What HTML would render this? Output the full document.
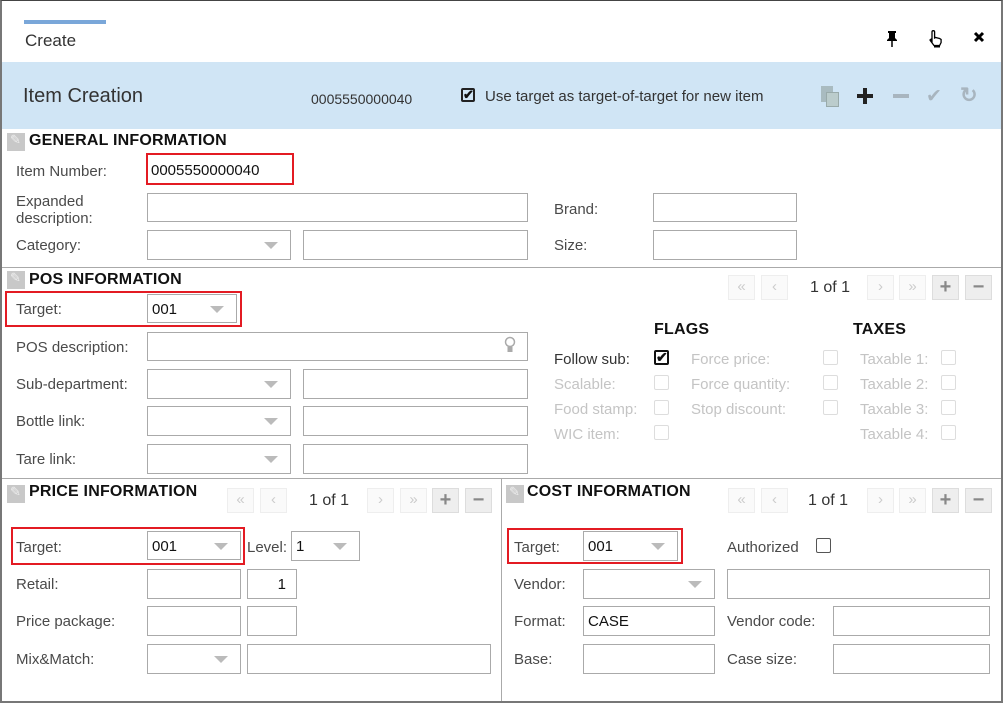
<!DOCTYPE html>
<html><head><style>
*{box-sizing:border-box;margin:0;padding:0}
body{width:1003px;height:703px;position:relative;overflow:hidden;background:#fff;font-family:"Liberation Sans",sans-serif;font-size:14px;color:#333}
.a{position:absolute}
.frame{left:0;top:0;width:1003px;height:703px;border:2px solid #777;border-top:1px solid #444;}
.l{position:absolute;color:#4a4a4a;font-size:15px;line-height:17px;margin-top:2px}
.g{color:#c4c4c4}
.i{position:absolute;border:1px solid #aaa;background:#fff;font-size:15px;padding-left:4px;color:#111}
.s::after{content:"";position:absolute;right:12px;top:50%;margin-top:-3px;border-left:7px solid transparent;border-right:7px solid transparent;border-top:7px solid #bbb}
.red{position:absolute;border:2px solid #e31b23}
.h{position:absolute;font-weight:bold;font-size:16px;color:#111;letter-spacing:.2px}
.ic{position:absolute;width:18px;height:18px;background:#c8c8c8}
.ic::after{content:"✎";position:absolute;left:3px;top:-1px;font-size:13px;color:#eee}
.pb{position:absolute;width:27px;height:25px;border:1px solid #eee;background:#fafafa;color:#ccc;text-align:center;line-height:22px;font-size:15px}
.pb.d{background:#eee;border-color:#ddd;color:#888;font-weight:bold;font-size:20px}
.cb{position:absolute;width:15px;height:15px;border:1px solid #ddd;border-radius:2px}
.hl{position:absolute;left:0;width:1003px;height:1px;background:#aaa}
</style></head><body>
<div class="a" style="left:24px;top:20px;width:82px;height:4px;background:#7aa7d9"></div>
<div class="a" style="left:25px;top:31px;font-size:17px;color:#333">Create</div>
<svg class="a" style="left:885px;top:30px" width="14" height="18" viewBox="0 0 14 18"><path d="M3 1h8v2h-1v5l2 2v1H2v-1l2-2V3H3z" fill="#000"/><path d="M7 11v6" stroke="#000" stroke-width="1.5"/></svg>
<svg class="a" style="left:927px;top:29px" width="16" height="19" viewBox="0 0 16 19"><path d="M5 12V3a1.3 1.3 0 0 1 2.6 0v6l1-.5 2 .5 2 .5 1.5 1v3l-1.5 3H7l-3-4-1-1.5 1-.8z" fill="#fff" stroke="#000" stroke-width="1.3"/><rect x="7" y="16" width="6" height="2.5" fill="#000"/></svg>
<svg class="a" style="left:973px;top:31px" width="12" height="12" viewBox="0 0 12 12"><path d="M2 2l8 8M10 2l-8 8" stroke="#000" stroke-width="3"/></svg>
<div class="a" style="left:2px;top:62px;width:999px;height:67px;background:#d0e5f5"></div>
<div class="a" style="left:23px;top:85px;font-size:20px;color:#333">Item Creation</div>
<div class="a" style="left:311px;top:91px;font-size:14px;color:#333">0005550000040</div>
<div class="a" style="left:461px;top:88px;width:14px;height:14px;border:2px solid #222;border-radius:2px;font-size:13px;line-height:10px;font-weight:bold;color:#111">✔</div>
<div class="a" style="left:485px;top:88px;font-size:15px;color:#333">Use target as target-of-target for new item</div>
<div class="a" style="left:821px;top:86px;width:12px;height:16px;background:#9aa;opacity:.7"></div>
<div class="a" style="left:826px;top:92px;width:13px;height:15px;background:#bcc;border:1px solid #9aa"></div>
<div class="a" style="left:857px;top:94px;width:16px;height:4px;background:#222"></div>
<div class="a" style="left:863px;top:88px;width:4px;height:16px;background:#222"></div>
<div class="a" style="left:893px;top:94px;width:16px;height:4px;background:#a8b5bf"></div>
<div class="a" style="left:926px;top:85px;font-size:19px;color:#a8b5bf">✔</div>
<div class="a" style="left:960px;top:83px;font-size:21px;color:#a8b5bf;font-weight:bold">↻</div>

<div class="ic" style="left:7px;top:133px"></div>
<div class="h" style="left:29px;top:132px">GENERAL INFORMATION</div>
<div class="l" style="left:16px;top:161px">Item Number:</div>
<div class="red" style="left:146px;top:153px;width:148px;height:32px"></div>
<div class="a" style="left:151px;top:162px;font-size:15px;color:#111">0005550000040</div>
<div class="l" style="left:16px;top:191px">Expanded<br>description:</div>
<div class="i" style="left:147px;top:193px;width:381px;height:29px"></div>
<div class="l" style="left:554px;top:199px">Brand:</div>
<div class="i" style="left:653px;top:193px;width:144px;height:29px"></div>
<div class="l" style="left:16px;top:235px">Category:</div>
<div class="i s" style="left:147px;top:230px;width:144px;height:30px"></div>
<div class="i" style="left:303px;top:230px;width:225px;height:30px"></div>
<div class="l" style="left:554px;top:235px">Size:</div>
<div class="i" style="left:653px;top:230px;width:144px;height:30px"></div>
<div class="hl" style="top:267px"></div>

<div class="ic" style="left:7px;top:271px"></div>
<div class="h" style="left:29px;top:271px">POS INFORMATION</div>
<div class="pb" style="left:728px;top:275px">«</div><div class="pb" style="left:761px;top:275px">‹</div>
<div class="a" style="left:810px;top:279px;font-size:16px;color:#333">1 of 1</div>
<div class="pb" style="left:867px;top:275px">›</div><div class="pb" style="left:899px;top:275px">»</div>
<div class="pb d" style="left:932px;top:275px">+</div><div class="pb d" style="left:965px;top:275px">−</div>
<div class="red" style="left:5px;top:291px;width:237px;height:36px"></div>
<div class="l" style="left:16px;top:299px">Target:</div>
<div class="i s" style="left:147px;top:294px;width:90px;height:29px;padding-top:6px">001</div>
<div class="l" style="left:16px;top:337px">POS description:</div>
<div class="i" style="left:147px;top:332px;width:381px;height:29px"></div>
<svg class="a" style="left:504px;top:336px" width="12" height="18" viewBox="0 0 12 18"><circle cx="6" cy="6" r="4.5" fill="none" stroke="#aaa" stroke-width="1.5"/><rect x="3.5" y="11" width="5" height="5" fill="#aaa"/></svg>
<div class="l" style="left:16px;top:374px">Sub-department:</div>
<div class="i s" style="left:147px;top:369px;width:144px;height:30px"></div>
<div class="i" style="left:303px;top:369px;width:225px;height:30px"></div>
<div class="l" style="left:16px;top:411px">Bottle link:</div>
<div class="i s" style="left:147px;top:406px;width:144px;height:30px"></div>
<div class="i" style="left:303px;top:406px;width:225px;height:30px"></div>
<div class="l" style="left:16px;top:449px">Tare link:</div>
<div class="i s" style="left:147px;top:444px;width:144px;height:30px"></div>
<div class="i" style="left:303px;top:444px;width:225px;height:30px"></div>

<div class="h" style="left:654px;top:321px">FLAGS</div>
<div class="h" style="left:853px;top:321px">TAXES</div>
<div class="l" style="left:554px;top:349px;color:#333">Follow sub:</div>
<div class="a" style="left:654px;top:350px;width:15px;height:15px;border:2px solid #111;border-radius:2px;font-size:14px;line-height:10px;font-weight:bold;color:#111">✔</div>
<div class="l g" style="left:554px;top:374px">Scalable:</div>
<div class="l g" style="left:554px;top:399px">Food stamp:</div>
<div class="l g" style="left:554px;top:424px">WIC item:</div>
<div class="cb" style="left:654px;top:375px"></div><div class="cb" style="left:654px;top:400px"></div><div class="cb" style="left:654px;top:425px"></div>
<div class="l g" style="left:691px;top:349px">Force price:</div>
<div class="l g" style="left:691px;top:374px">Force quantity:</div>
<div class="l g" style="left:691px;top:399px">Stop discount:</div>
<div class="cb" style="left:823px;top:350px"></div><div class="cb" style="left:823px;top:375px"></div><div class="cb" style="left:823px;top:400px"></div>
<div class="l g" style="left:860px;top:349px">Taxable 1:</div>
<div class="l g" style="left:860px;top:374px">Taxable 2:</div>
<div class="l g" style="left:860px;top:399px">Taxable 3:</div>
<div class="l g" style="left:860px;top:424px">Taxable 4:</div>
<div class="cb" style="left:941px;top:350px"></div><div class="cb" style="left:941px;top:375px"></div><div class="cb" style="left:941px;top:400px"></div><div class="cb" style="left:941px;top:425px"></div>
<div class="hl" style="top:478px"></div>
<div class="a" style="left:501px;top:478px;width:1px;height:225px;background:#aaa"></div>

<div class="ic" style="left:7px;top:485px"></div>
<div class="h" style="left:29px;top:483px">PRICE INFORMATION</div>
<div class="pb" style="left:227px;top:488px">«</div><div class="pb" style="left:260px;top:488px">‹</div>
<div class="a" style="left:309px;top:492px;font-size:16px;color:#333">1 of 1</div>
<div class="pb" style="left:367px;top:488px">›</div><div class="pb" style="left:400px;top:488px">»</div>
<div class="pb d" style="left:432px;top:488px">+</div><div class="pb d" style="left:465px;top:488px">−</div>
<div class="red" style="left:11px;top:527px;width:234px;height:38px"></div>
<div class="l" style="left:16px;top:537px">Target:</div>
<div class="i s" style="left:147px;top:531px;width:94px;height:29px;padding-top:6px">001</div>
<div class="l" style="left:247px;top:537px">Level:</div>
<div class="i s" style="left:291px;top:531px;width:69px;height:30px;padding-top:6px">1</div>
<div class="l" style="left:16px;top:574px">Retail:</div>
<div class="i" style="left:147px;top:569px;width:94px;height:30px"></div>
<div class="i" style="left:247px;top:569px;width:50px;height:30px;text-align:right;padding-right:10px;padding-top:6px">1</div>
<div class="l" style="left:16px;top:611px">Price package:</div>
<div class="i" style="left:147px;top:606px;width:94px;height:30px"></div>
<div class="i" style="left:247px;top:606px;width:50px;height:30px"></div>
<div class="l" style="left:16px;top:649px">Mix&amp;Match:</div>
<div class="i s" style="left:147px;top:644px;width:94px;height:30px"></div>
<div class="i" style="left:247px;top:644px;width:244px;height:30px"></div>

<div class="ic" style="left:506px;top:485px"></div>
<div class="h" style="left:527px;top:483px">COST INFORMATION</div>
<div class="pb" style="left:728px;top:488px">«</div><div class="pb" style="left:761px;top:488px">‹</div>
<div class="a" style="left:808px;top:492px;font-size:16px;color:#333">1 of 1</div>
<div class="pb" style="left:867px;top:488px">›</div><div class="pb" style="left:899px;top:488px">»</div>
<div class="pb d" style="left:932px;top:488px">+</div><div class="pb d" style="left:965px;top:488px">−</div>
<div class="red" style="left:507px;top:528px;width:176px;height:36px"></div>
<div class="l" style="left:514px;top:537px">Target:</div>
<div class="i s" style="left:583px;top:531px;width:95px;height:30px;padding-top:6px">001</div>
<div class="l" style="left:727px;top:537px">Authorized</div>
<div class="cb" style="left:816px;top:538px;border-color:#555"></div>
<div class="l" style="left:514px;top:574px">Vendor:</div>
<div class="i s" style="left:583px;top:569px;width:132px;height:30px"></div>
<div class="i" style="left:727px;top:569px;width:263px;height:30px"></div>
<div class="l" style="left:514px;top:611px">Format:</div>
<div class="i" style="left:583px;top:606px;width:132px;height:30px;padding-top:6px">CASE</div>
<div class="l" style="left:727px;top:611px">Vendor code:</div>
<div class="i" style="left:833px;top:606px;width:157px;height:30px"></div>
<div class="l" style="left:514px;top:649px">Base:</div>
<div class="i" style="left:583px;top:644px;width:132px;height:30px"></div>
<div class="l" style="left:727px;top:649px">Case size:</div>
<div class="i" style="left:833px;top:644px;width:157px;height:30px"></div>
<div class="a frame"></div>
</body></html>
